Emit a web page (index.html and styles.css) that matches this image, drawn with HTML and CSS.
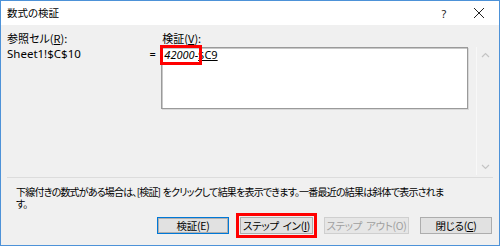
FILE: index.html
```html
<!DOCTYPE html>
<html lang="ja">
<head>
<meta charset="utf-8">
<link rel="stylesheet" href="styles.css">
</head>
<body>
<div class="window">
  <div class="titlebar">
    <span class="title">数式の検証</span>
    <span class="help">?</span>
    <span class="close">
      <svg width="12" height="12" viewBox="0 0 12 12"><path d="M1 1 L11 11 M11 1 L1 11" stroke="#222" stroke-width="1" fill="none"/></svg>
    </span>
  </div>
  <div class="content">
    <div class="main">
      <div class="left">
        <div class="label">参照セル(<u>R</u>):</div>
        <div class="ref">Sheet1!$C$10</div>
      </div>
      <div class="eq">=</div>
      <div class="right">
        <div class="label">検証(<u>V</u>):</div>
        <div class="box">
          <span class="formula"><i>42000-</i><u>$C9</u></span>
          <span class="mark"></span>
        </div>
      </div>
      <div class="scroll">
        <svg width="9" height="6" viewBox="0 0 9 6"><path d="M1 5 L4.5 1.5 L8 5" stroke="#c4c4c4" stroke-width="1.2" fill="none"/></svg>
        <svg width="9" height="6" viewBox="0 0 9 6"><path d="M1 1 L4.5 4.5 L8 1" stroke="#c4c4c4" stroke-width="1.2" fill="none"/></svg>
      </div>
    </div>
    <div class="sep"></div>
    <p class="desc">下線付きの数式がある場合は、[検証] をクリックして結果を表示できます。一番最近の結果は斜体で表示されま<br>す。</p>
    <div class="buttons">
      <button class="btn default">検証(<u>E</u>)</button>
      <button class="btn marked">ステップ イン(<u>I</u>)</button>
      <button class="btn disabled">ステップ アウト(<u>O</u>)</button>
      <button class="btn">閉じる(<u>C</u>)</button>
    </div>
  </div>
</div>
</body>
</html>
```

FILE: styles.css
```css
* { box-sizing: border-box; }
html, body { margin: 0; padding: 0; background: #ffffff; }
body {
  width: 500px;
  height: 247px;
  overflow: hidden;
  font-family: "Noto Sans CJK JP", "Noto Sans", sans-serif;
  font-size: 11px;
  color: #000;
  font-feature-settings: "palt";
}
.window {
  width: 500px;
  height: 246px;
  border: 1px solid #4d92d8;
  background: #f0f0f0;
  display: flex;
  flex-direction: column;
}
.titlebar {
  height: 24px;
  background: #ffffff;
  display: flex;
  align-items: center;
  padding-left: 6px;
}
.title { flex: 1; font-size: 10.5px; line-height: 14px; }
.help {
  width: 16px;
  margin-right: 21px;
  text-align: center;
  font-family: "Noto Sans", sans-serif;
  font-size: 11px;
  color: #222;
}
.close { width: 12px; height: 12px; margin-right: 14px; display: flex; }
.content {
  flex: 1;
  display: flex;
  flex-direction: column;
  padding: 0 6px;
}
.main {
  height: 152px;
  display: flex;
  padding-top: 6px;
}
.left { width: 143px; }
.label { line-height: 15px; height: 15px; }
.ref {
  margin-top: 1px;
  font-family: "Noto Sans", sans-serif;
  font-size: 11.5px;
  line-height: 14px;
}
.eq {
  width: 12px;
  padding-top: 16px;
  font-family: "Noto Sans", sans-serif;
  font-size: 11px;
  line-height: 14px;
}
.right { width: 308px; }
.right .label { padding-left: 1px; }
.box {
  position: relative;
  margin-top: 1px;
  height: 62px;
  background: #fff;
  border: 1px solid #9a9a9a;
  box-shadow: inset 1px 1px 0 #c8c8c8, 1px 1px 0 #d8d8d8;
  padding: 0 2px;
}
.formula {
  font-family: "Noto Sans", sans-serif;
  font-size: 11px;
  line-height: 14px;
  display: block;
}
.mark {
  position: absolute;
  left: -2px;
  top: -3px;
  width: 42px;
  height: 20px;
  border: 3px solid #ff0000;
}
.scroll {
  margin-left: 8px;
  margin-top: 16px;
  width: 17px;
  height: 128px;
  border-left: 1px solid #f8f8f8;
  display: flex;
  flex-direction: column;
  justify-content: space-between;
  align-items: center;
  padding: 5px 0 5px;
}
.sep {
  height: 1px;
  background: #dcdcdc;
}
.desc {
  margin: 8px 0 0 9px;
  line-height: 12px;
  font-size: 10px;
  letter-spacing: -0.8px;
  word-spacing: 1px;
  white-space: nowrap;
}
.buttons {
  margin-top: 7px;
  display: flex;
  justify-content: flex-end;
  gap: 11px;
  padding-right: 1px;
}
.btn {
  height: 17px;
  width: 72px;
  padding: 0;
  background: #e1e1e1;
  border: 1px solid #adadad;
  font-family: "Noto Sans CJK JP", sans-serif;
  font-feature-settings: "palt";
  font-size: 10.5px;
  letter-spacing: -0.3px;
  word-spacing: 2px;
  line-height: 13px;
  white-space: pre;
  color: #000;
}
.btn.default {
  border: 1px solid #0078d7;
  box-shadow: inset 0 0 0 1px #b0b0b0;
}
.btn.marked {
  width: 73px;
  outline: 3px solid #ff0000;
  outline-offset: 1px;
}
.btn.disabled {
  width: 85px;
  background: #e6e6e6;
  border-color: #cfcfcf;
  color: #a0a0a0;
}
.btn.disabled u { text-decoration: none; }
.btn.default u { text-decoration: none; }
```
